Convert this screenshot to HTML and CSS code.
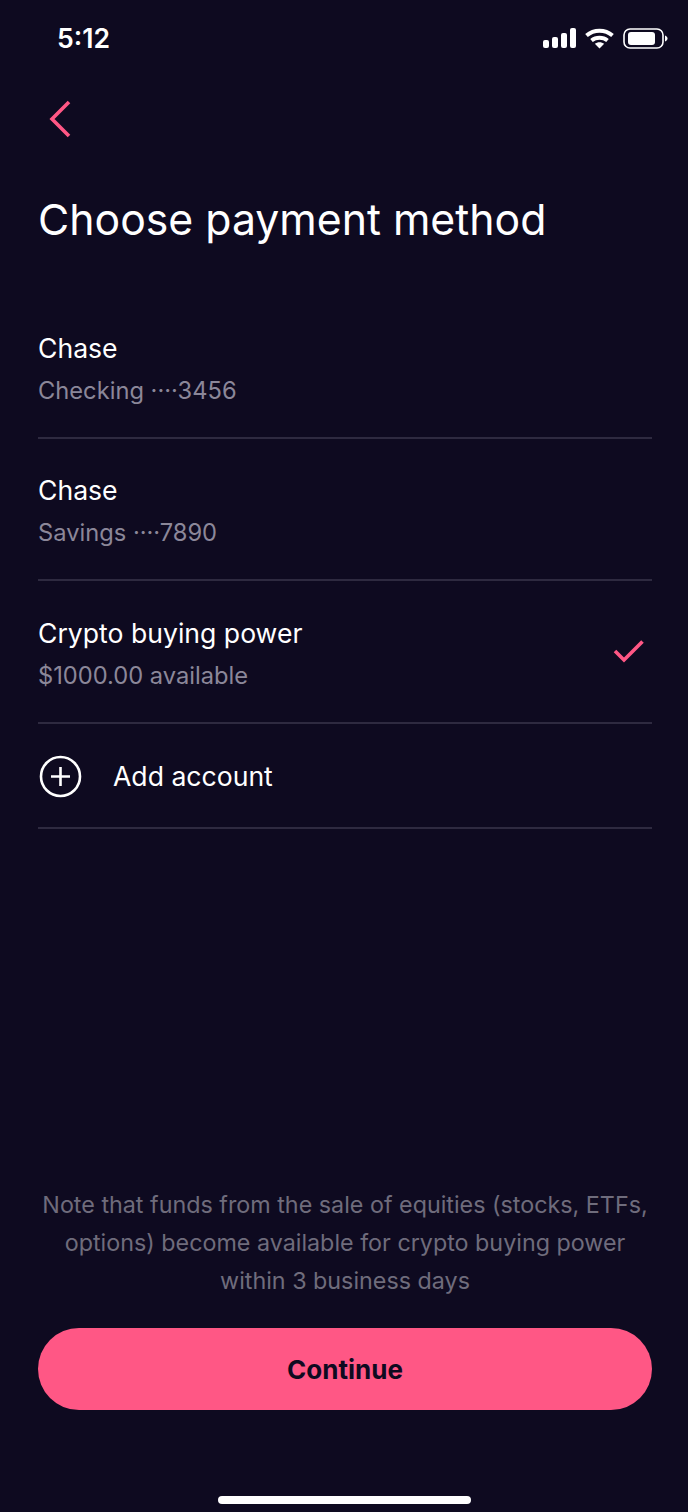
FILE: index.html
```html
<!DOCTYPE html>
<html lang="en">
<head>
<meta charset="utf-8">
<title>Choose payment method</title>
<link rel="stylesheet" href="styles.css">
</head>
<body>
<main class="screen">
  <div class="status">
    <span class="time">5:12</span>
    <div class="status-icons">
      <svg width="33" height="20" viewBox="0 0 33 20" fill="#fff"><rect x="0" y="12" width="6" height="8" rx="2"/><rect x="9" y="9" width="6" height="11" rx="2"/><rect x="18" y="5" width="6" height="15" rx="2"/><rect x="27" y="0" width="6" height="20" rx="2"/></svg>
      <svg width="29" height="21" viewBox="0 0 29 21" fill="none" stroke="#fff" stroke-width="4"><path d="M1.500 7.500C9 1 20 1 27.500 7.500"/><path d="M6.500 12.500C11 8.800 18 8.800 22.500 12.500"/><path d="M14.500 20.500 L9.800 15.800C12.500 13.700 16.500 13.700 19.200 15.800Z" fill="#fff" stroke="none"/></svg>
      <svg width="45" height="21" viewBox="0 0 45 21" fill="none"><rect x="1" y="1" width="39" height="19" rx="6" stroke="#fff" stroke-width="1.600"/><rect x="5" y="4" width="27" height="13" rx="3" fill="#fff"/><path d="M42 7.500c1.500.5 2.500 1.600 2.500 3s-1 2.500-2.500 3z" fill="#fff"/></svg>
    </div>
  </div>
  <div class="nav">
    <svg class="back" width="22" height="38" viewBox="0 0 22 38" fill="none" stroke="#ff5785" stroke-width="3.600"><path d="M20 2 L3 19 L20 36"/></svg>
  </div>
  <h1 class="title">Choose payment method</h1>
  <ul class="list">
    <li class="row">
      <div class="row-text"><div class="name">Chase</div><div class="sub">Checking ····3456</div></div>
    </li>
    <li class="row">
      <div class="row-text"><div class="name">Chase</div><div class="sub">Savings ····7890</div></div>
    </li>
    <li class="row">
      <div class="row-text"><div class="name">Crypto buying power</div><div class="sub">$1000.00 available</div></div>
      <svg class="check" width="32" height="24" viewBox="0 0 32 24" fill="none" stroke="#ff5785" stroke-width="3.600"><path d="M2 12 L11 21 L29.500 2.500"/></svg>
    </li>
    <li class="row add">
      <svg width="44" height="44" viewBox="0 0 44 44" fill="none" stroke="#fff" stroke-width="2.600"><circle cx="22.500" cy="22.500" r="19.500"/><path d="M22.500 13V32M13 22.500H32"/></svg>
      <span class="name">Add account</span>
    </li>
  </ul>
  <p class="note">Note that funds from the sale of equities (stocks, ETFs, options) become available for crypto buying power within 3 business days</p>
  <button class="cta">Continue</button>
  <div class="home"></div>
</main>
</body>
</html>
```

FILE: styles.css
```css
* { box-sizing: border-box; }
html, body { margin: 0; padding: 0; background: #0e0a20; }
.screen {
  width: 688px;
  height: 1512px;
  display: flex;
  flex-direction: column;
  font-family: Inter, "Liberation Sans", sans-serif;
  color: #fff;
  overflow: hidden;
}
.status {
  height: 76px;
  padding: 0 20px 0 57px;
  display: flex;
  justify-content: space-between;
  align-items: center;
}
.time { font-size: 26.600px; font-weight: 600; }
.status-icons { display: flex; align-items: center; gap: 9px; }
.nav { height: 86px; padding: 0 0 0 49px; display: flex; align-items: center; }
.title {
  margin: 31px 0 0;
  padding: 0 38px;
  font-size: 42.750px;
  line-height: 54px;
  font-weight: 400;
}
.list { list-style: none; margin: 49px 36px 0 38px; padding: 0; }
.row {
  height: 142.670px;
  padding-top: 6px;
  border-bottom: 2px solid #2e2a40;
  display: flex;
  align-items: center;
  justify-content: space-between;
}
.row-text { display: flex; flex-direction: column; gap: 13px; }
.name { font-size: 26.600px; line-height: 30px; }
.sub { font-size: 23.700px; line-height: 30px; color: #8b8799; }
.check { margin: 0 7px 8px 0; }
.add { height: 105.300px; padding-top: 0; justify-content: flex-start; gap: 31px; }
.note {
  margin: auto 36px 0 38px;
  font-size: 23.300px;
  line-height: 38px;
  color: #6f6c7c;
  text-align: center;
}
.cta {
  margin: 28px 36px 0 38px;
  height: 82px;
  border: 0;
  border-radius: 41px;
  background: #ff5785;
  color: #0e0a20;
  font-family: inherit;
  font-size: 26px;
  font-weight: 700;
  flex: none;
}
.home {
  flex: none;
  align-self: center;
  width: 253px;
  height: 8px;
  margin: 86px 0 8px;
  border-radius: 4px;
  background: #fff;
}
```
